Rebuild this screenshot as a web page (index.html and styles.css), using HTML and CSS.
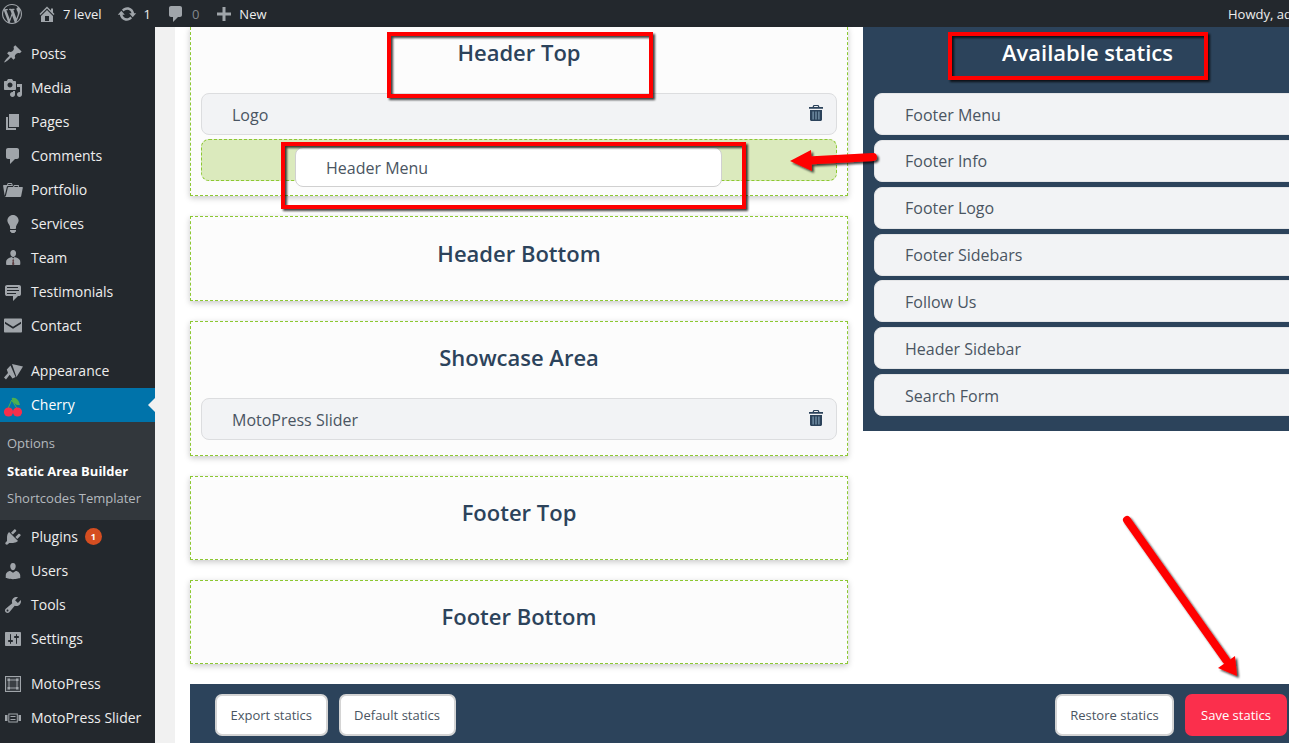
FILE: index.html
```html
<!DOCTYPE html>
<html lang="en">
<head>
	<meta charset="UTF-8">
	<meta name="viewport" content="width=device-width, initial-scale=1.0">
	<title>Static Area Builder - 7 level</title>
	<link rel="stylesheet" href="styles.css">
</head>
<body>
	<div id="page">
		<div id="adminbar">
			<svg class="bar-icon wp" viewBox="0 0 20 20"><path d="M20 10c0-5.51-4.49-10-10-10C4.48 0 0 4.49 0 10c0 5.52 4.48 10 10 10 5.51 0 10-4.48 10-10zM7.78 15.37L4.37 6.22c.55-.02 1.17-.08 1.17-.08.5-.06.44-1.13-.06-1.11 0 0-1.45.11-2.37.11-.18 0-.37 0-.58-.01C4.12 2.69 6.87 1.11 10 1.11c2.33 0 4.45.87 6.05 2.34-.68-.11-1.65.39-1.65 1.58 0 .74.45 1.36.9 2.1.35.61.55 1.36.55 2.46 0 1.49-1.4 5-1.4 5l-3.03-8.37c.54-.02.82-.17.82-.17.5-.05.44-1.25-.06-1.22 0 0-1.44.12-2.38.12-.87 0-2.33-.12-2.33-.12-.5-.03-.56 1.2-.06 1.22l.92.08 1.26 3.41zM17.41 10c.24-.64.74-1.87.43-4.25.7 1.29 1.05 2.71 1.05 4.25 0 3.29-1.73 6.24-4.4 7.78.97-2.59 1.94-5.2 2.92-7.78zM6.1 18.09C3.12 16.65 1.11 13.53 1.11 10c0-1.3.23-2.48.72-3.59C3.25 10.3 4.67 14.2 6.1 18.09zm4.03-6.63l2.58 6.98c-.86.29-1.76.45-2.71.45-.79 0-1.57-.11-2.29-.33.81-2.38 1.62-4.74 2.42-7.1z"/></svg>
			<svg class="bar-icon home" viewBox="0 0 20 20"><path d="M16 8.5l1.53 1.53-1.06 1.06L10 4.62l-6.47 6.47-1.06-1.06L10 2.5l4 4v-2h2v4zm-6-2.46l6 5.99V18H4v-5.97zM12 17v-5H8v5h4z"/></svg>
			<span class="bar-text site">7 level</span>
			<svg class="bar-icon update" viewBox="0 0 20 20"><path d="M10.2 3.28c3.53 0 6.43 2.61 6.92 6h2.08l-3.5 4-3.5-4h2.32c-.45-1.97-2.21-3.45-4.32-3.45-1.45 0-2.73.71-3.54 1.78L4.95 5.66C6.23 4.2 8.11 3.28 10.2 3.28zm-.4 13.44c-3.52 0-6.43-2.61-6.92-6H.8l3.5-4c1.17 1.33 2.33 2.67 3.5 4H5.48c.45 1.97 2.21 3.45 4.32 3.45 1.45 0 2.73-.71 3.54-1.78l1.71 1.95c-1.28 1.46-3.15 2.38-5.25 2.38z"/></svg>
			<span class="bar-text count">1</span>
			<svg class="bar-icon comment" viewBox="0 0 20 20"><path d="M5 2h9c1.1 0 2 .9 2 2v7c0 1.1-.9 2-2 2h-2l-5 5v-5H5c-1.1 0-2-.9-2-2V4c0-1.1.9-2 2-2z"/></svg>
			<span class="bar-text count-dim">0</span>
			<svg class="bar-icon plus" viewBox="0 0 20 20"><path d="M17 8.500v3h-5.500v5.500h-3v-5.500H3v-3h5.500V3h3v5.500z"/></svg>
			<span class="bar-text new">New</span>
			<span class="howdy">Howdy, admin</span>
		</div>

		<div id="wrap">
			<ul id="menu">
				<li class="item"><svg viewBox="0 0 20 20"><path d="M10.44 3.02l1.82-1.82 6.36 6.35-1.83 1.82c-1.05-.68-2.48-.57-3.41.36l-.75.75c-.92.93-1.04 2.35-.35 3.41l-1.83 1.82-2.41-2.41-2.8 2.79c-.42.42-3.38 2.71-3.8 2.29s1.86-3.39 2.28-3.81l2.79-2.79L4.1 9.36l1.83-1.82c1.05.69 2.48.57 3.41-.36l.75-.75c.93-.92 1.04-2.35.35-3.41z"/></svg>Posts</li>
				<li class="item"><svg viewBox="0 0 20 20"><path d="M13 11V4c0-.55-.45-1-1-1h-1.67L9 1H5L3.67 3H2c-.55 0-1 .45-1 1v7c0 .55.45 1 1 1h10c.55 0 1-.45 1-1zM7 4.5c1.38 0 2.5 1.12 2.5 2.5S8.38 9.5 7 9.5 4.5 8.38 4.5 7 5.62 4.5 7 4.5zM14 6h5v10.5c0 1.38-1.12 2.5-2.5 2.5S14 17.88 14 16.5s1.12-2.5 2.5-2.5c.17 0 .34.02.5.05V9h-3V6zm-4 8.05V13h2v3.5c0 1.38-1.12 2.5-2.5 2.5S7 17.88 7 16.5 8.12 14 9.5 14c.17 0 .34.02.5.05z"/></svg>Media</li>
				<li class="item"><svg viewBox="0 0 20 20"><path d="M6 15V2h10v13H6zm-1 1h8v2H3V5h2v11z"/></svg>Pages</li>
				<li class="item"><svg viewBox="0 0 20 20"><path d="M5 2h9c1.1 0 2 .9 2 2v7c0 1.1-.9 2-2 2h-2l-5 5v-5H5c-1.1 0-2-.9-2-2V4c0-1.1.9-2 2-2z"/></svg>Comments</li>
				<li class="item"><svg viewBox="0 0 20 20"><path d="M4 5H.78c-.37 0-.74.32-.69.84l1.56 9.99S3.5 8.47 3.86 6.7c.11-.53.61-.7.98-.7H10s-.7-2.08-.77-2.31C9.11 3.25 8.89 3 8.45 3H5.14c-.36 0-.7.23-.8.64C4.25 4.04 4 5 4 5zm4.88 0h-4s.42-1 .87-1h2.13c.48 0 1 1 1 1zM2.67 16.25c-.31.47-.76.75-1.26.75h15.73c.54 0 .92-.31 1.03-.83.44-2.19 1.68-8.44 1.68-8.44.07-.5-.3-.73-.62-.73H16V5.53c0-.16-.26-.53-.66-.53h-3.76c-.52 0-.87.58-.87.58L10 7H5.59c-.32 0-.63.19-.69.5 0 0-1.59 6.7-1.72 7.33-.07.37-.22.99-.51 1.42zM15.38 7H11s.58-1 1.13-1h2.29c.71 0 .96 1 .96 1z"/></svg>Portfolio</li>
				<li class="item"><svg viewBox="0 0 20 20"><path d="M10 1c3.11 0 5.63 2.52 5.63 5.62 0 1.84-2.03 4.58-2.03 4.58-.33.44-.6 1.25-.6 1.8v1c0 .55-.45 1-1 1H8c-.55 0-1-.45-1-1v-1c0-.55-.27-1.36-.6-1.8 0 0-2.02-2.74-2.02-4.58C4.38 3.52 6.89 1 10 1zM7 16.87V16h6v.87c0 .62-.13 1.13-.75 1.13H12c0 .62-.4 1-1.02 1h-2c-.61 0-.98-.38-.98-1h-.25c-.62 0-.75-.51-.75-1.13z"/></svg>Services</li>
				<li class="item">
					<svg viewBox="0 0 20 20">
						<path d="M10.200 2c1.800 0 2.900 1.300 2.900 3.200s-1.200 3.800-2.900 3.800-2.900-1.900-2.900-3.800S8.400 2 10.200 2zM6.500 9.800l2.400-.7 1.300 1.500 1.300-1.500 2.400.7c2 .6 3.400 2.300 3.400 4.300v1.900c0 .6-.5 1-1 1H4.100c-.5 0-1-.4-1-1v-1.900c0-2 1.400-3.700 3.400-4.300z"/>
						<path class="tie" d="M10.200 11l1 1.200-.5.900.7 3.200-1.200 1.200-1.200-1.200.7-3.200-.5-.9z"/>
					</svg>Team
				</li>
				<li class="item"><svg viewBox="0 0 20 20"><path d="M4 3h12c.55 0 1.02.2 1.41.59S18 4.45 18 5v7c0 .55-.2 1.02-.59 1.41S16.55 14 16 14h-1l-5 5v-5H4c-.55 0-1.02-.2-1.41-.59S2 12.55 2 12V5c0-.55.2-1.02.59-1.41S3.45 3 4 3zm11 2H4v1h11V5zm1 3H4v1h12V8zm-3 3H4v1h9v-1z"/></svg>Testimonials</li>
				<li class="item"><svg viewBox="0 0 20 20"><path d="M2 2.500h16c.5 0 1 .4 1 1v12c0 .6-.5 1-1 1H2c-.5 0-1-.4-1-1v-12c0-.6.5-1 1-1zm0 3.300v2l8 5 8-5v-2l-8 5z"/></svg>Contact</li>
				<li class="item sep"><svg viewBox="0 0 20 20"><path d="M9 3l11 2.500-6.500 10.500zM7.500 4.500l5 11.500-3 1.500-2.800-3.800L3 18.500 1 16.500l4-4.500-1.200-3.500z"/></svg>Appearance</li>
				<li class="item current">
					<svg class="cherry" viewBox="0 0 20 20">
						<path class="leaf" d="M8.700 3.200c4-1.500 7.300 2 8.300 6.800-4 .6-7.500-2-8.300-6.800z"/>
						<path class="stem" d="M8.700 5L5 13.500M8.700 5l5.300 8.500"/>
						<circle class="fruit" cx="5.500" cy="17" r="4.600"/>
						<circle class="fruit" cx="14.500" cy="17" r="4.600"/>
					</svg>Cherry
				</li>
				<li class="submenu">
					<div class="sub">Options</div>
					<div class="sub active">Static Area Builder</div>
					<div class="sub">Shortcodes Templater</div>
				</li>
				<li class="item"><svg viewBox="0 0 20 20"><path d="M13.11 4.360L9.870 7.600 8 5.730l3.240-3.240c.35-.34 1.050-.2 1.560.32.52.51.66 1.210.31 1.550zm-8 1.770l.91-1.120 9.010 9.010-1.190.84c-.71.71-2.630 1.160-3.820 1.160H6.140L4.900 17.260c-.59.59-1.540.59-2.120 0-.59-.58-.59-1.530 0-2.120l1.240-1.240v-3.880c0-1.130.4-3.190 1.090-3.890zm7.260 3.970l3.240-3.240c.34-.35 1.040-.21 1.550.31.52.51.66 1.210.31 1.550l-3.240 3.250z"/></svg>Plugins<span class="badge">1</span></li>
				<li class="item"><svg viewBox="0 0 20 20"><path d="M10 9.250c-2.270 0-2.730-3.440-2.730-3.440C7 4.020 7.820 2 9.970 2c2.160 0 2.980 2.020 2.710 3.810 0 0-.41 3.440-2.680 3.440zm0 2.570L12.720 10c2.390 0 4.520 2.330 4.520 4.530v2.490s-3.650 1.130-7.240 1.130c-3.650 0-7.240-1.130-7.240-1.130v-2.490c0-2.250 1.940-4.480 4.470-4.480z"/></svg>Users</li>
				<li class="item"><svg viewBox="0 0 20 20"><path d="M16.680 9.770c-1.340 1.340-3.300 1.670-4.950.99l-5.410 6.520c-.99.99-2.590.99-3.580 0s-.99-2.59 0-3.570l6.520-5.420c-.68-1.650-.35-3.610.99-4.950 1.280-1.280 3.120-1.620 4.720-1.060l-2.890 2.890 2.820 2.820 2.860-2.870c.53 1.580.18 3.390-1.080 4.650zM3.810 16.210c.4.39 1.040.39 1.430 0 .4-.4.4-1.040 0-1.430-.39-.4-1.030-.4-1.430 0-.39.39-.39 1.030 0 1.430z"/></svg>Tools</li>
				<li class="item"><svg viewBox="0 0 20 20"><path d="M18 16V4c0-.55-.45-1-1-1H3c-.55 0-1 .45-1 1v12c0 .55.45 1 1 1h14c.55 0 1-.45 1-1zM8 11h1c.55 0 1 .45 1 1s-.45 1-1 1H8v1.500c0 .28-.22.5-.5.5s-.5-.22-.5-.5V13H6c-.55 0-1-.45-1-1s.45-1 1-1h1V5.500c0-.28.22-.5.5-.5s.5.22.5.5V11zm5-2h-1c-.55 0-1-.45-1-1s.45-1 1-1h1V5.500c0-.28.22-.5.5-.5s.5.22.5.5V7h1c.55 0 1 .45 1 1s-.45 1-1 1h-1v5.500c0 .28-.22.5-.5.5s-.5-.22-.5-.5V9z"/></svg>Settings</li>
				<li class="item sep">
					<svg viewBox="0 0 20 20">
						<rect class="mp-frame" x="2.500" y="2.500" width="15" height="15"/>
						<rect class="mp-line" x="6" y="6" width="8" height="8"/>
						<path d="M4.500 4.500h2.500v2.500H4.500zM13 4.500h2.500v2.500H13zM4.500 13h2.500v2.500H4.500zM13 13h2.500v2.500H13z"/>
					</svg>MotoPress
				</li>
				<li class="item">
					<svg viewBox="0 0 20 20">
						<rect class="mp-line" x="5.800" y="6" width="8.500" height="8"/>
						<path d="M7.500 8h5v1h-5zM7.500 11h5v1h-5zM2 7h2.500v6H2zM15.500 7H18v6h-2.500z"/>
					</svg>MotoPress Slider
				</li>
			</ul>

			<div id="gutter"></div>

			<div id="content">
				<div class="columns">
					<div class="areas">
						<div class="card first">
							<h2 class="card-title">Header Top</h2>
							<div class="row">
								<span>Logo</span>
								<svg class="trash" viewBox="0 0 14 16"><path class="trash-bg" d="M2 5h10v10H2z"/><path fill-rule="evenodd" d="M4.500 0h5l1 2H14v1.800H0V2h3.500zM5.300 1l-.4 1h4.200l-.4-1zM1 5h12v9.500c0 .8-.7 1.500-1.500 1.500h-9C1.700 16 1 15.300 1 14.500zM3.500 6.500V14.500h1.200V6.500zM6.400 6.500V14.500h1.200V6.500zM9.300 6.500V14.500h1.200V6.500z"/></svg>
							</div>
							<div class="dropzone"></div>
						</div>
						<div class="card">
							<h2 class="card-title">Header Bottom</h2>
						</div>
						<div class="card">
							<h2 class="card-title">Showcase Area</h2>
							<div class="row">
								<span>MotoPress Slider</span>
								<svg class="trash" viewBox="0 0 14 16"><path class="trash-bg" d="M2 5h10v10H2z"/><path fill-rule="evenodd" d="M4.500 0h5l1 2H14v1.800H0V2h3.500zM5.300 1l-.4 1h4.200l-.4-1zM1 5h12v9.500c0 .8-.7 1.500-1.500 1.500h-9C1.700 16 1 15.300 1 14.500zM3.500 6.500V14.500h1.200V6.500zM6.400 6.500V14.500h1.200V6.500zM9.300 6.500V14.500h1.200V6.500z"/></svg>
							</div>
						</div>
						<div class="card">
							<h2 class="card-title">Footer Top</h2>
						</div>
						<div class="card">
							<h2 class="card-title">Footer Bottom</h2>
						</div>
					</div>

					<div class="available">
						<h2 class="available-title">Available statics</h2>
						<div class="row">Footer Menu</div>
						<div class="row">Footer Info</div>
						<div class="row">Footer Logo</div>
						<div class="row">Footer Sidebars</div>
						<div class="row">Follow Us</div>
						<div class="row">Header Sidebar</div>
						<div class="row">Search Form</div>
					</div>
				</div>

				<div class="actions">
					<div class="btn-group">
						<button type="button" class="btn">Export statics</button>
						<button type="button" class="btn">Default statics</button>
					</div>
					<div class="btn-group">
						<button type="button" class="btn">Restore statics</button>
						<button type="button" class="btn btn-save">Save statics</button>
					</div>
				</div>
			</div>
		</div>

		<div class="dragging">Header Menu</div>

		<svg id="notes" viewBox="0 0 1289 743">
			<defs>
				<filter id="shade" x="-10%" y="-10%" width="120%" height="120%">
					<feDropShadow dx="2" dy="2" stdDeviation="1.200" flood-color="#000" flood-opacity=".75"/>
				</filter>
			</defs>
			<g filter="url(#shade)">
				<rect class="mark" x="389" y="34" width="262" height="62"/>
				<rect class="mark" x="283" y="144" width="461" height="63"/>
				<rect class="mark" x="950" y="34" width="256" height="44"/>
				<path class="arrow-line" d="M873 157L808 160.500"/>
				<path class="arrow-head" d="M790 161L811 150L812 171Z"/>
				<path class="arrow-line" d="M1127 520L1226 660"/>
				<path class="arrow-head" d="M1237 676L1218 668L1235 656Z"/>
			</g>
		</svg>
	</div>
</body>
</html>
```

FILE: styles.css
```css
html, body {
	margin: 0;
	height: 100%;
	overflow: hidden;
}
body {
	font-family: 'Open Sans', 'Noto Sans', sans-serif;
	background: #fff;
}
#page {
	position: relative;
	width: 1289px;
	height: 743px;
	overflow: hidden;
}

/* admin bar */
#adminbar {
	display: flex;
	align-items: center;
	height: 27px;
	background: #23282d;
	color: #eee;
	font-size: 13px;
}
.bar-icon {
	flex: none;
	width: 20px;
	height: 20px;
	margin-left: 15px;
	fill: #a0a5aa;
}
.bar-icon.wp {
	margin-left: 2px;
}
.bar-icon.update {
	margin-left: 16px;
}
.bar-text {
	margin-left: 6px;
}
.bar-text.count-dim {
	color: #82878c;
}
.bar-text.new {
	margin-left: 5px;
}
.howdy {
	margin-left: auto;
	width: 61px;
	overflow: hidden;
	white-space: nowrap;
}

/* side menu */
#wrap {
	display: flex;
	height: 716px;
}
#menu {
	flex: none;
	width: 155px;
	margin: 0;
	padding: 10px 0 0;
	list-style: none;
	background: #23282d;
	color: #eee;
	font-size: 14px;
}
.item {
	position: relative;
	display: flex;
	align-items: center;
	height: 34px;
	box-sizing: border-box;
	padding-bottom: 2px;
	white-space: nowrap;
}
.item > svg {
	flex: none;
	width: 20px;
	height: 20px;
	margin: 2px 8px 0 3px;
	fill: #a0a5aa;
	overflow: visible;
}
.item .tie {
	fill: #5d3f42;
}
.item .mp-frame {
	fill: #3a3f44;
	stroke: #a0a5aa;
}
.item .mp-line {
	fill: none;
	stroke: #a0a5aa;
}
.item.sep {
	margin-top: 11px;
}
.item.current {
	background: #0073aa;
	color: #fff;
}
.item.current::after {
	content: '';
	position: absolute;
	right: 0;
	top: 10px;
	border: 7px solid transparent;
	border-left: 0;
	border-right-color: #f1f1f1;
}
.cherry .leaf {
	fill: #4caf50;
}
.cherry .stem {
	fill: none;
	stroke: #4caf50;
	stroke-width: 1;
}
.cherry .fruit {
	fill: #f72f4b;
}
.submenu {
	height: 98px;
	padding-top: 8px;
	box-sizing: border-box;
	background: #32373c;
	font-size: 13px;
	color: #b4b9be;
}
.sub {
	padding-left: 7px;
	height: 27.500px;
	line-height: 27.500px;
	white-space: nowrap;
}
.sub.active {
	color: #fff;
	font-weight: 700;
}
.badge {
	width: 17px;
	height: 17px;
	margin-left: 7px;
	border-radius: 50%;
	background: #d54e21;
	color: #fff;
	font-size: 9px;
	font-weight: 700;
	line-height: 17px;
	text-align: center;
}
#gutter {
	flex: none;
	width: 20px;
	background: #f1f1f1;
}

/* builder */
#content {
	flex: none;
	width: 1114px;
	padding-left: 15px;
	box-sizing: border-box;
}
.columns {
	display: flex;
	align-items: flex-start;
	gap: 15px;
}
.areas {
	flex: none;
	width: 658px;
	display: flex;
	flex-direction: column;
	gap: 20px;
}
.card {
	height: 84px;
	box-sizing: border-box;
	padding: 0 10px;
	border: 1px dashed #8cc832;
	background: #fcfcfc;
	box-shadow: 0 2px 6px rgba(0, 0, 0, .22);
}
.card.first {
	border-top: 0;
	height: 169px;
}
.card:nth-child(2) {
	height: 85px;
}
.card:nth-child(2) .card-title {
	padding-top: 20px;
}
.card:nth-child(3) {
	height: 135px;
}
.card-title {
	margin: 0;
	padding-top: 19px;
	height: 76px;
	box-sizing: border-box;
	font-size: 22px;
	font-weight: 600;
	line-height: 32px;
	text-align: center;
	color: #2c435b;
}
.card.first .card-title {
	padding-top: 9px;
	height: 66px;
}
.row {
	display: flex;
	align-items: center;
	justify-content: space-between;
	height: 42px;
	box-sizing: border-box;
	padding: 1px 13px 0 30px;
	border: 1px solid #dcdddf;
	border-radius: 8px;
	background: #f2f3f5;
	color: #4a5562;
	font-size: 16px;
}
.trash {
	width: 14px;
	height: 16px;
	margin-bottom: 3px;
	fill: #2c435b;
}
.trash .trash-bg {
	fill: #7f9db3;
}
.dropzone {
	height: 42px;
	margin-top: 4px;
	box-sizing: border-box;
	border: 1px dashed #8cc832;
	border-radius: 8px;
	background: #dbeabd;
}
.dragging {
	position: absolute;
	left: 295px;
	top: 147px;
	width: 427px;
	height: 40px;
	box-sizing: border-box;
	padding-left: 30px;
	border: 1px solid #d0d0d0;
	border-radius: 8px;
	background: #fff;
	color: #4a5562;
	font-size: 16px;
	line-height: 40px;
}
.available {
	flex: none;
	width: 450px;
	height: 404px;
	box-sizing: border-box;
	padding: 0 10px 0 11px;
	background: #2c435b;
}
.available-title {
	margin: 0;
	padding-top: 9px;
	height: 66px;
	box-sizing: border-box;
	width: 427px;
	font-size: 22px;
	font-weight: 600;
	line-height: 32px;
	text-align: center;
	color: #fff;
}
.available .row {
	border-color: #e4e5e7;
	margin-bottom: 4.850px;
}

/* bottom bar */
.actions {
	display: flex;
	justify-content: space-between;
	align-items: flex-start;
	width: 1099px;
	height: 59px;
	margin-top: 20px;
	box-sizing: border-box;
	padding: 10px 2px 0 25px;
	background: #2c435b;
}
.btn-group {
	display: flex;
	gap: 11px;
}
.btn {
	height: 42px;
	padding: 0 13.500px;
	border: 2px solid #d4d4d4;
	border-radius: 7px;
	background: #fff;
	color: #4a5562;
	font-family: inherit;
	font-size: 13px;
	cursor: pointer;
}
.btn-save {
	padding: 0 14px;
	border-color: #fb2f4c;
	background: #fb2f4c;
	color: #fff;
}

/* red notes drawn on the screenshot */
#notes {
	position: absolute;
	left: 0;
	top: 0;
	width: 1289px;
	height: 743px;
	pointer-events: none;
}
.mark {
	fill: none;
	stroke: #f00;
	stroke-width: 4;
}
.arrow-line {
	fill: none;
	stroke: #f00;
	stroke-width: 8;
	stroke-linecap: round;
}
.arrow-head {
	fill: #f00;
}
```
